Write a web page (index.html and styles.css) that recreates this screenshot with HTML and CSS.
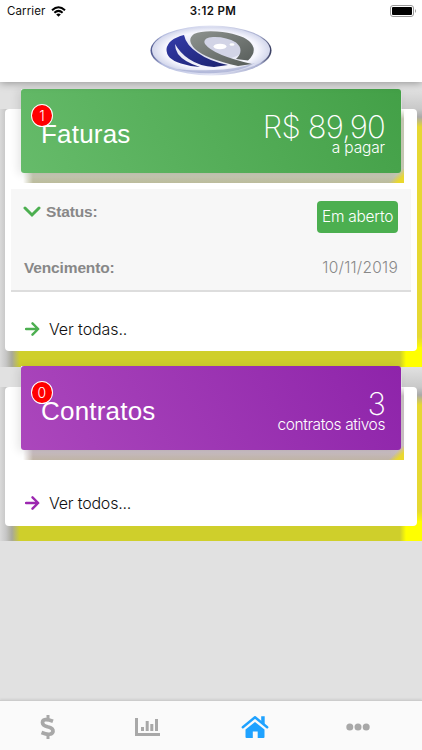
FILE: index.html
```html
<!DOCTYPE html>
<html lang="pt-BR">
<head>
<meta charset="utf-8">
<title>Início</title>
<link rel="stylesheet" href="styles.css">
</head>
<body>
<header class="top">
  <div class="status">
    <div class="carrier"><span>Carrier</span>
      <svg width="15" height="11" viewBox="0 0 15 11"><g fill="none" stroke="#000" stroke-width="2"><path d="M1 4.2Q7.5-1.8 14 4.2"/><path d="M3.4 6.8Q7.5 3 11.6 6.8"/></g><path d="M5.2 8.4Q7.5 6.5 9.8 8.4L7.5 10.8Z"/></svg>
    </div>
    <div class="clock">3:12 PM</div>
    <svg class="battery" width="27" height="12" viewBox="0 0 27 12"><rect x=".5" y=".5" width="23" height="11" rx="2.5" fill="#fff" stroke="#999"/><rect x="2" y="2" width="20" height="8" rx="1"/><path d="M25 4q2 2 0 4z" fill="#999"/></svg>
  </div>
  <svg class="logo" width="122" height="52" viewBox="0 0 122 52">
    <defs>
      <linearGradient id="rim" x1="0" y1="0" x2="1" y2="0"><stop offset="0" stop-color="#4b548c"/><stop offset=".1" stop-color="#b4bcdf"/><stop offset=".5" stop-color="#e4e6f5"/><stop offset=".9" stop-color="#a9afd0"/><stop offset="1" stop-color="#34395c"/></linearGradient>
      <radialGradient id="glass"><stop offset="0" stop-color="#d5d7e8"/><stop offset=".45" stop-color="#e6e7f4"/><stop offset=".78" stop-color="#f7f7fe"/><stop offset="1" stop-color="#d3d7ec"/></radialGradient>
      <linearGradient id="blue" x1="0" y1="0" x2="1" y2="1"><stop offset="0" stop-color="#343caa"/><stop offset="1" stop-color="#1b216f"/></linearGradient>
      <linearGradient id="gray" x1="0" y1="0" x2="1" y2="1"><stop offset="0" stop-color="#8f9490"/><stop offset="1" stop-color="#555b58"/></linearGradient>
    </defs>
    <ellipse cx="61" cy="25.5" rx="60.5" ry="25" fill="url(#rim)"/>
    <ellipse cx="61" cy="25" rx="59" ry="23.5" fill="url(#glass)"/>
    <path d="M26 44Q42 49 66 48Q91 47 105 38Q84 45 63 45Q41 46 26 44Z" fill="#9aa2cc" opacity=".6"/>
    <ellipse cx="72" cy="22" rx="22" ry="12" fill="#d2d4e6"/>
    <path d="M34 10Q18 14 16.500 24Q16 34 31 38.500Q40 41.500 50 42Q34 37 28 29Q25 24 25 19Q30 28 39 34Q50 41.500 64 42L78 40Q59 36 48 28Q36 20 34 10Z" fill="url(#blue)"/>
    <path d="M102 39L88 41Q56 34 45 24Q36 15 44 9Q52 5.500 67 6.500Q90 8.500 99 16Q109 25 98 35.500L86 34Q95 25 86 17.500Q76 11.500 63 12Q52 13 55 19Q63 30 102 39Z" fill="url(#gray)"/>
    <ellipse cx="70" cy="21.500" rx="6.500" ry="2.800" fill="#fff"/><ellipse cx="82" cy="19.500" rx="2.500" ry="1.200" fill="#fff"/>
  </svg>
</header>

<main>
  <section class="block">
    <article class="card">
      <div class="lift">
        <div class="panel green">
          <h2>Faturas<span class="badge">1</span></h2>
          <div class="total"><strong class="amount">R$ 89,90</strong><small class="pay">a pagar</small></div>
        </div>
      </div>
      <div class="details">
        <div class="row"><b class="label state"><svg width="18" height="12" viewBox="0 0 18 12"><path d="M2 2L9 9L16 2" fill="none" stroke="#4caf50" stroke-width="3" stroke-linecap="round"/></svg>Status:</b><span class="tag">Em aberto</span></div>
        <div class="row date"><b class="label">Vencimento:</b><span class="due">10/11/2019</span></div>
      </div>
      <a class="more"><svg width="15" height="14" viewBox="0 0 15 14"><path d="M1 7H13M7.5 1.3L13.2 7L7.5 12.7" fill="none" stroke="#4caf50" stroke-width="2.4" stroke-linecap="round" stroke-linejoin="round"/></svg>Ver todas..</a>
    </article>
  </section>
  <section class="block second">
    <article class="card short">
      <div class="lift">
        <div class="panel purple">
          <h2>Contratos<span class="badge">0</span></h2>
          <div class="total"><strong class="amount">3</strong><small class="active">contratos ativos</small></div>
        </div>
      </div>
      <a class="more"><svg width="15" height="14" viewBox="0 0 15 14"><path d="M1 7H13M7.5 1.3L13.2 7L7.5 12.7" fill="none" stroke="#9c27b0" stroke-width="2.4" stroke-linecap="round" stroke-linejoin="round"/></svg>Ver todos...</a>
    </article>
  </section>
</main>

<nav class="tabs">
  <svg width="16" height="26" viewBox="0 0 16 26"><path d="M8 1V6M8 20V25" stroke="#a8a8a8" stroke-width="3"/><path d="M13 7.2Q3 3.6 2.5 8.4Q2.5 11.3 7.5 12.7Q13.5 14 13 17.6Q11.5 22.5 1.5 18.5" fill="none" stroke="#a8a8a8" stroke-width="3.7"/></svg>
  <svg width="26" height="20" viewBox="0 0 26 20" fill="#a8a8a8"><path d="M1 1h3v15h22v3H1zM7 10h3v4H7zM11.7 4h3v10h-3zM16.3 7h3v7h-3zM21 2h3v12h-3z"/></svg>
  <svg width="28" height="24" viewBox="0 0 28 24" fill="#1fa2ff"><path d="M14 7L23.500 14.500V22Q23.500 23 22.500 23H16.700V16.500H11.800V23H5.500Q4.500 23 4.500 22V14.500Z"/><path d="M1.8 12.2L14 2.3L26.2 12.2" fill="none" stroke="#1fa2ff" stroke-width="2.4" stroke-linecap="round" stroke-linejoin="round"/><path d="M20.2 1.2h3.5v8l-3.5-3z"/></svg>
  <svg width="24" height="8" viewBox="0 0 24 8" fill="#a8a8a8"><circle cx="3.8" cy="4" r="3.5"/><circle cx="12" cy="4" r="3.5"/><circle cx="20.2" cy="4" r="3.5"/></svg>
</nav>
</body>
</html>
```
FILE: styles.css
```css
* { box-sizing: border-box; }
body {
  margin: 0; height: 750px; overflow: hidden;
  display: flex; flex-direction: column;
  background: #e1e1e1; color: #111;
  font-family: Inter, "Liberation Sans", sans-serif; font-weight: 300;
}
svg { display: block; flex: none; }
.top { position: relative; z-index: 2; height: 82px; flex: none; background: #fff; box-shadow: 0 1px 8px rgba(0,0,0,.35); }
.status { display: grid; grid-template-columns: 1fr auto 1fr; height: 22px; padding: 0 5px 0 7px; align-items: center; font-size: 11.5px; font-weight: 400; }
.carrier { display: flex; gap: 6px; align-items: center; letter-spacing: .1px; }
.clock { font-weight: 600; letter-spacing: .4px; padding-left: 2px; }
.battery { justify-self: end; }
.logo { margin: 3px 0 0 150px; }
main { flex: 1; padding-top: 7px; }
.block {
  height: 278px; padding: 20px 5px 0;
  background:
    linear-gradient(90deg, #cfcf2b, #ff0 6px) right bottom / 22px 20px no-repeat,
    linear-gradient(#e1e1e1, #c9c9c9 20px, #aaa 28px, #e6d832 38px, #e6d832 calc(100% - 30px), #ff0 calc(100% - 18px)) right top / 20px 100% no-repeat,
    linear-gradient(90deg, #dadada, #c6c6c6 6px, #a9a99b 12px, #cfcf2b 20px) left bottom / 24px calc(100% - 20px) no-repeat,
    linear-gradient(#cfcf2b, #cfcf2b) 20px 100% / calc(100% - 40px) 30px no-repeat;
}
.second { height: 174px; }
.second .lift { margin-top: -21px; }
.card { height: 242px; background: #fff; border-radius: 4px; display: flex; flex-direction: column; }
.short { height: 139px; }
.lift {
  width: 383px; height: 94px; margin: -20px 0 0 16px; flex: none;
  background:
    linear-gradient(135deg, transparent 45%, #ead82e 75%) right bottom / 15px 14px no-repeat,
    linear-gradient(90deg, #fff 2px, transparent 12px),
    linear-gradient(transparent 20px, #c6c9b4 30px, #c8cab6 86px, #bcbc9c 94px);
}
.second .lift {
  background:
    linear-gradient(135deg, transparent 45%, #ead82e 75%) right bottom / 15px 14px no-repeat,
    linear-gradient(90deg, #fff 2px, transparent 12px),
    linear-gradient(transparent 20px, #c9bfc3 30px, #cbbfc5 86px, #bfb4a6 94px);
}
.panel { width: 380px; height: 84px; padding: 0 16px 0 20px; border-radius: 3px; display: flex; justify-content: space-between; color: #fff; box-shadow: -3px 1px 10px rgba(0,0,0,.1); }
.green { background: linear-gradient(60deg, #66bb6a, #43a047); }
.purple { background: linear-gradient(60deg, #ab47bc, #8e24aa); }
h2 { position: relative; margin: 30px 0 0; font: 400 26px/30px "Liberation Sans", sans-serif; letter-spacing: .2px; }
.badge { position: absolute; left: -10px; top: -15px; width: 22px; height: 23px; border: 1px solid #fff; border-radius: 50%; background: #f00; font: 300 14px/21px Inter, sans-serif; text-align: center; }
.total { display: flex; flex-direction: column; align-items: flex-end; padding-top: 20px; }
.amount { font-size: 31px; line-height: 35px; font-weight: 200; letter-spacing: -.8px; }
.total small { font-size: 15.5px; line-height: 18px; margin-top: -5px; letter-spacing: -.15px; }
.total .active { letter-spacing: -.4px; }
.details { height: 103px; margin: 6px 6px 0; padding: 11px 13px 0 13px; background: #f7f7f7; border-bottom: 2px solid #ddd; flex: none; color: #888; }
.row { display: flex; justify-content: space-between; font-size: 15.5px; }
.label { font: bold 15.5px/22px "Liberation Sans", sans-serif; letter-spacing: -.15px; }
.state { display: flex; align-items: center; gap: 5px; height: 23px; margin-left: -1px; }
.tag { width: 81px; height: 32px; margin-top: 1px; border-radius: 4px; background: #4caf50; color: #fff; text-align: center; line-height: 32px; letter-spacing: -.25px; }
.date { margin-top: 24px; line-height: 22px; }
.due { letter-spacing: .25px; }
.more { display: flex; align-items: center; gap: 9px; margin: 26px 0 0 20px; font-size: 16px; line-height: 22px; letter-spacing: -.1px; }
.short .more { margin-top: 32px; letter-spacing: -.2px; }
.tabs { height: 50px; flex: none; display: grid; grid-template-columns: 95px 104px 111px 95px; align-items: center; justify-items: center; padding-top: 3px; background: #fafafa; border-top: 1px solid #ccc; box-shadow: 0 -1px 2px rgba(0,0,0,.08); }
```
